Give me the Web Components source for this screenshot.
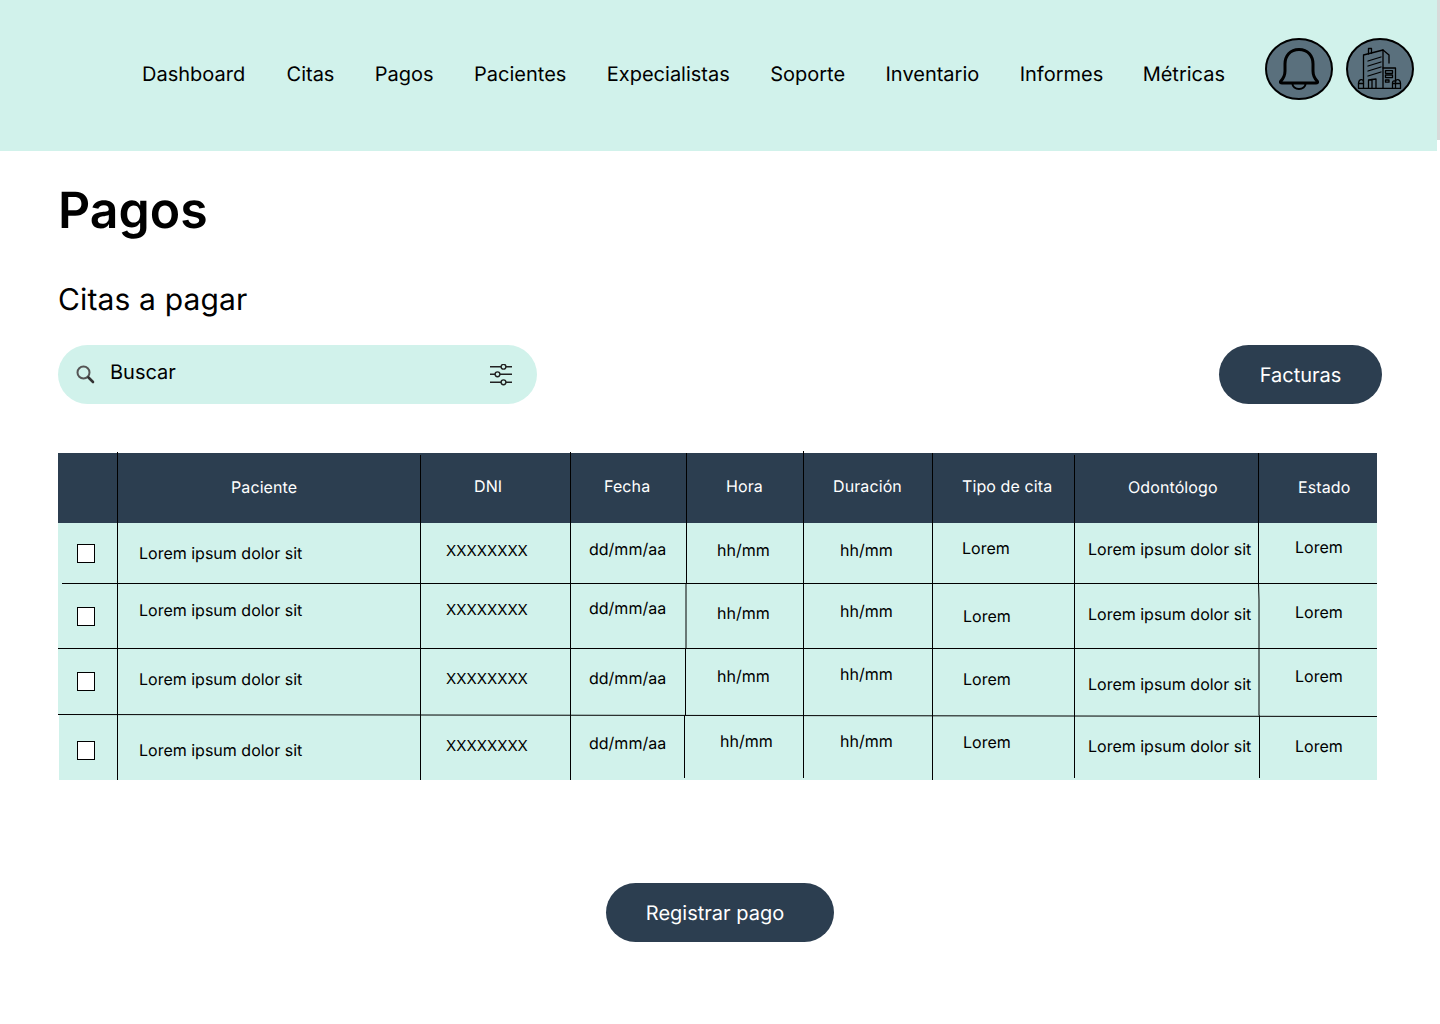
<!DOCTYPE html>
<html lang="es">
<head>
<meta charset="utf-8">
<title>Pagos</title>
<style>
    html, body { margin: 0; background: #fff; }
    body { font-family: Inter, "Liberation Sans", sans-serif; color: #000; text-rendering: geometricPrecision; }
</style>
</head>
<body>
<top-bar>
    <span>Dashboard</span>
    <span>Citas</span>
    <span>Pagos</span>
    <span>Pacientes</span>
    <span>Expecialistas</span>
    <span>Soporte</span>
    <span>Inventario</span>
    <span>Informes</span>
    <span>Métricas</span>
    <icon-badge slot="icons" kind="bell"></icon-badge>
    <icon-badge slot="icons" kind="building"></icon-badge>
</top-bar>
<pay-page>
    <span slot="title">Pagos</span>
    <span slot="subtitle">Citas a pagar</span>
    <search-box slot="search">Buscar</search-box>
    <pill-button slot="action" width="163">Facturas</pill-button>
    <pay-table slot="table"></pay-table>
    <pill-button slot="footer" width="228" shift="10">Registrar pago</pill-button>
</pay-page>

<script>
class TopBar extends HTMLElement {
    constructor() {
        super();
        this.attachShadow({mode: 'open'}).innerHTML = `
          <style>
            :host { display: block; height: 151px; position: relative; }
            .bar {
                width: 1437px; height: 151px; box-sizing: border-box;
                background: #D1F2EB; padding: 38px 23px 0 142px;
                display: flex; align-items: flex-start;
            }
            nav { display: flex; gap: 40.4px; height: 72px; align-items: center; font-size: 20px; line-height: 24px; white-space: nowrap; }
            ::slotted(:first-child) { margin-right: 1px; }
            ::slotted(:nth-child(9)) { margin-left: -1px; }
            .icons { display: flex; gap: 13px; margin-left: auto; }
            /* thin grey strip at the right edge of the frame */
            .edge { position: absolute; top: 0; right: 0; width: 3px; height: 140px; background: #d9d9d9; }
          </style>
          <div class="bar">
            <nav><slot></slot></nav>
            <div class="icons"><slot name="icons"></slot></div>
          </div>
          <div class="edge"></div>
        `;
    }
}

class IconBadge extends HTMLElement {
    static icons = {
        bell: `
            <g fill="none" stroke="#000" stroke-width="3" stroke-linejoin="round" stroke-linecap="round">
              <path d="M34 11.5C25 11.5 20 18 20 26V33C20 38 18 41 15.5 43.5Q15 45 17 45H51Q53 45 52.5 43.5C50 41 48 38 48 33V26C48 18 43 11.5 34 11.5Z"/>
              <path d="M27.5 46a6.5 5 0 0 0 13 0" stroke-width="2"/>
            </g>`,
        building: `
            <g fill="none" stroke="#000" stroke-width="1.3" stroke-linejoin="round" stroke-linecap="round">
              <path d="M17.5 50V17L37 12V50"/>
              <path d="M37 12L43 17V25"/>
              <path d="M22.5 16V10.5H25.5V15.3"/>
              <path d="M22 23L35 19M22 28L35 24M22 33L35 29M22 38L35 34"/>
              <path d="M22.5 50V42L30 41V50M26 41.5V50"/>
              <path d="M37 30H49.5V50"/>
              <rect x="39.5" y="32.7" width="7" height="2.6"/>
              <rect x="39.5" y="37" width="7" height="2.6"/>
              <rect x="39.5" y="42" width="3.5" height="2.2"/>
              <path d="M12.5 50.3H54.5"/>
              <path d="M12.5 50V46C12.5 40.5 17.5 40.5 17.5 44"/>
              <path d="M12.5 45.5H17.5"/>
              <path d="M49.5 44C49.5 40.5 54.5 40.5 54.5 46V50"/>
              <path d="M46.5 50V44.5C46.5 43 49.5 42 49.5 44M46.5 45.5H54.5"/>
            </g>`
    };

    constructor() {
        super();
        this.attachShadow({mode: 'open'});
    }

    connectedCallback() {
        this.shadowRoot.innerHTML = `
          <style>
            :host { display: block; width: 68px; height: 62px; }
            svg { display: block; }
          </style>
          <svg width="68" height="62" viewBox="0 0 68 62">
            <ellipse cx="34" cy="31" rx="33" ry="30" fill="#5A707D" stroke="#000" stroke-width="2"/>
            ${IconBadge.icons[this.getAttribute('kind')] || ''}
          </svg>
        `;
    }
}

class PayPage extends HTMLElement {
    constructor() {
        super();
        this.attachShadow({mode: 'open'}).innerHTML = `
          <style>
            :host { display: block; padding: 30px 58px 0; }
            h1 { margin: 0; font-size: 50px; line-height: 60px; font-weight: 600; }
            h2 { margin: 39px 0 0; font-size: 30px; line-height: 40px; font-weight: 400; letter-spacing: .14px; }
            .tools { display: flex; justify-content: space-between; margin-top: 25px; }
            .table { margin-top: 49px; }
            .foot { display: flex; justify-content: center; margin-top: 103px; }
          </style>
          <h1><slot name="title"></slot></h1>
          <h2><slot name="subtitle"></slot></h2>
          <div class="tools"><slot name="search"></slot><slot name="action"></slot></div>
          <div class="table"><slot name="table"></slot></div>
          <div class="foot"><slot name="footer"></slot></div>
        `;
    }
}

class SearchBox extends HTMLElement {
    constructor() {
        super();
        this.attachShadow({mode: 'open'}).innerHTML = `
          <style>
            :host { display: block; }
            .box {
                width: 479px; height: 59px; box-sizing: border-box; border-radius: 30px;
                background: #D1F2EB; display: flex; align-items: center;
                padding: 0 25px 0 18px; font-size: 20px;
            }
            .label { margin-left: 14px; flex: 1; padding-bottom: 5px; }
            svg { display: block; }
          </style>
          <div class="box">
            <svg width="20" height="20" viewBox="0 0 20 20">
              <circle cx="7.5" cy="7.5" r="6" fill="none" stroke="#555" stroke-width="2"/>
              <path d="M12.5 12.5L17 17" stroke="#333" stroke-width="2.6" stroke-linecap="round"/>
            </svg>
            <span class="label"><slot></slot></span>
            <svg width="22" height="22" viewBox="0 0 22 22">
              <g fill="none" stroke="#222" stroke-width="1.4">
                <path d="M0 2.7H22M0 10.3H22M0 18.3H22"/>
                <circle cx="13.5" cy="2.7" r="2.4" fill="#D1F2EB"/>
                <circle cx="7.5" cy="10.3" r="2.4" fill="#D1F2EB"/>
                <circle cx="13.5" cy="18.3" r="2.4" fill="#D1F2EB"/>
              </g>
            </svg>
          </div>
        `;
    }
}

class PillButton extends HTMLElement {
    constructor() {
        super();
        this.attachShadow({mode: 'open'});
    }

    connectedCallback() {
        this.shadowRoot.innerHTML = `
          <style>
            :host { display: block; }
            .pill {
                width: ${this.getAttribute('width')}px; height: 59px; border-radius: 30px; box-sizing: border-box;
                padding-right: ${this.getAttribute('shift') || 0}px;
                background: #2C3E50; color: #fff; font-size: 20px;
                display: flex; align-items: center; justify-content: center;
            }
          </style>
          <div class="pill"><slot></slot></div>
        `;
    }
}

class PayTable extends HTMLElement {
    // column edges on the page, rows start at these y
    static colX = [58, 117, 420, 570, 686, 803, 932, 1074, 1258, 1377];
    static rowY = [523, 583, 648, 715, 780];

    static head = [
        ['', 0, 0],
        ['Paciente', 231, 487], ['DNI', 474, 486], ['Fecha', 604, 486], ['Hora', 726, 486],
        ['Duración', 833, 486], ['Tipo de cita', 962, 486], ['Odontólogo', 1128, 487], ['Estado', 1298, 487],
    ];

    // text, x, y centre of each cell: the rows in the design are not aligned
    static rows = [
        {box: 544, cells: [['Lorem ipsum dolor sit', 139, 553], ['XXXXXXXX', 446, 551], ['dd/mm/aa', 589, 549], ['hh/mm', 717, 550], ['hh/mm', 840, 550], ['Lorem', 962, 548], ['Lorem ipsum dolor sit', 1088, 549], ['Lorem', 1295, 547]]},
        {box: 607, cells: [['Lorem ipsum dolor sit', 139, 610], ['XXXXXXXX', 446, 610], ['dd/mm/aa', 589, 608], ['hh/mm', 717, 613], ['hh/mm', 840, 611], ['Lorem', 963, 616], ['Lorem ipsum dolor sit', 1088, 614], ['Lorem', 1295, 612]]},
        {box: 672, cells: [['Lorem ipsum dolor sit', 139, 679], ['XXXXXXXX', 446, 679], ['dd/mm/aa', 589, 678], ['hh/mm', 717, 676], ['hh/mm', 840, 674], ['Lorem', 963, 679], ['Lorem ipsum dolor sit', 1088, 684], ['Lorem', 1295, 676]]},
        {box: 741, cells: [['Lorem ipsum dolor sit', 139, 750], ['XXXXXXXX', 446, 746], ['dd/mm/aa', 589, 743], ['hh/mm', 720, 741], ['hh/mm', 840, 741], ['Lorem', 963, 742], ['Lorem ipsum dolor sit', 1088, 746], ['Lorem', 1295, 746]]},
    ];

    static lines = [
        'M117.5 452V780', 'M420.5 455V780', 'M570.5 452V780',
        'M686.5 453V583L686 584V648L685.5 649V715L684.5 716V778',
        'M803.5 451V778', 'M932.5 453V780', 'M1074.5 455V778',
        'M1258.5 453V583L1259 600V715L1259.5 716V778',
        'M62 583.5H1377', 'M58 648.5H1377', 'M58 714.5L420 715L1377 716.5',
    ];

    constructor() {
        super();
        this.attachShadow({mode: 'open'});
    }

    connectedCallback() {
        this.render();
    }

    render() {
        const widths = PayTable.colX.slice(1).map((x, i) => x - PayTable.colX[i]);
        const heights = PayTable.rowY.slice(1).map((y, i) => y - PayTable.rowY[i]);

        this.shadowRoot.innerHTML = `
          <style>
            :host { display: block; position: relative; width: 1319px; font-size: 16px; line-height: 20px; }
            .grid {
                display: grid;
                grid-template-columns: ${widths.map(w => w + 'px').join(' ')};
                grid-template-rows: 70px ${heights.map(h => h + 'px').join(' ')};
            }
            .cell { box-sizing: border-box; background: #D1F2EB; color: #000; white-space: nowrap; overflow: visible; }
            .cell.head { background: #2C3E50; color: #fff; letter-spacing: .1px; }
            .cell.id { font-size: 15px; }
            .cell.last-first { margin-left: 1px; }
            .check { display: block; box-sizing: border-box; width: 18px; height: 19px; background: #fff; border: 1px solid #000; }
            svg { position: absolute; left: 0; top: 0; overflow: visible; }
          </style>
          <div class="grid">
            ${PayTable.head.map((cell, i) => this.renderHead(cell, i)).join('')}
            ${PayTable.rows.map((row, r) => this.renderRow(row, r)).join('')}
          </div>
          <svg width="1319" height="327"><g transform="translate(-58 -453)" fill="none" stroke="#000" stroke-width="1">
            ${PayTable.lines.map(d => `<path d="${d}"/>`).join('')}
          </g></svg>
        `;
    }

    renderHead([text, x, y], i) {
        if (!text) return '<div class="cell head"></div>';
        return `<div class="cell head" style="padding:${y - 10 - 453}px 0 0 ${x - PayTable.colX[i]}px">${text}</div>`;
    }

    renderRow(row, r) {
        const top = PayTable.rowY[r];
        const check = `<div class="cell ${r === 3 ? 'last-first' : ''}" style="padding:${row.box - top}px 0 0 ${r === 3 ? 18 : 19}px"><span class="check"></span></div>`;
        return check + row.cells.map(([text, x, y], i) =>
            `<div class="cell ${i === 1 ? 'id' : ''}" style="padding:${y - 10 - top}px 0 0 ${x - PayTable.colX[i + 1]}px">${text}</div>`
        ).join('');
    }
}

customElements.define('top-bar', TopBar);
customElements.define('icon-badge', IconBadge);
customElements.define('pay-page', PayPage);
customElements.define('search-box', SearchBox);
customElements.define('pill-button', PillButton);
customElements.define('pay-table', PayTable);
</script>
</body>
</html>
